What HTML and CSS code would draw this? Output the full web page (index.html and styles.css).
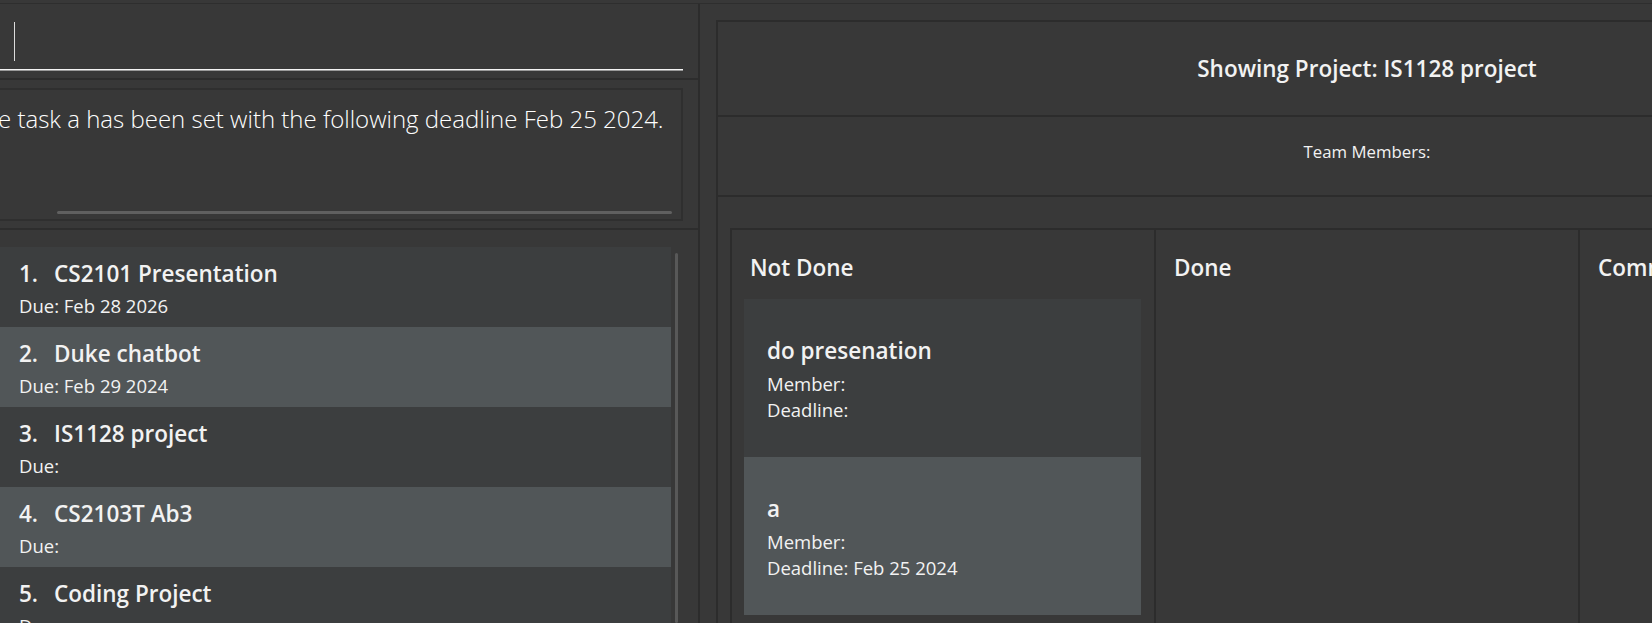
FILE: index.html
```html
<!DOCTYPE html>
<html>
<head>
<meta charset="utf-8">
<title>Project view</title>
<link rel="stylesheet" href="styles.css">
</head>
<body>
<div class="app">
  <div class="left">
    <div class="command-pane">
      <div class="command-field"><span class="caret"></span></div>
    </div>
    <div class="result-pane">
      <div class="result-box">
        <p class="result-text">e task a has been set with the following deadline Feb 25 2024.</p>
        <div class="hscroll"></div>
      </div>
    </div>
    <div class="list-pane">
      <ul class="task-list">
        <li class="task even"><div class="task-title"><span class="idx">1.</span><span>CS2101 Presentation</span></div><div class="task-due">Due: Feb 28 2026</div></li>
        <li class="task odd"><div class="task-title"><span class="idx">2.</span><span>Duke chatbot</span></div><div class="task-due">Due: Feb 29 2024</div></li>
        <li class="task even"><div class="task-title"><span class="idx">3.</span><span>IS1128 project</span></div><div class="task-due">Due:</div></li>
        <li class="task odd"><div class="task-title"><span class="idx">4.</span><span>CS2103T Ab3</span></div><div class="task-due">Due:</div></li>
        <li class="task even"><div class="task-title"><span class="idx">5.</span><span>Coding Project</span></div><div class="task-due">Due:</div></li>
      </ul>
      <div class="vscroll"></div>
    </div>
  </div>
  <div class="divider"></div>
  <div class="right">
    <div class="project">
      <div class="proj-header">Showing Project: IS1128 project</div>
      <div class="team">Team Members:</div>
      <div class="kanban">
        <section class="col">
          <h2 class="col-title">Not Done</h2>
          <div class="cards">
            <div class="card even">
              <div class="card-title">do presenation</div>
              <div class="card-line first">Member:</div>
              <div class="card-line">Deadline:</div>
            </div>
            <div class="card odd">
              <div class="card-title">a</div>
              <div class="card-line first">Member:</div>
              <div class="card-line">Deadline: Feb 25 2024</div>
            </div>
          </div>
        </section>
        <section class="col">
          <h2 class="col-title">Done</h2>
        </section>
        <section class="col">
          <h2 class="col-title">Comments</h2>
        </section>
      </div>
    </div>
  </div>
</div>
</body>
</html>
```
FILE: styles.css
```css
* { box-sizing: border-box; margin: 0; padding: 0; }

html, body {
  width: 1652px;
  height: 623px;
  overflow: hidden;
}

body {
  background: #383838;
  font-family: "Open Sans", "Noto Sans", sans-serif;
  color: #f2f2f2;
}

.app {
  display: flex;
  margin-top: 3px;
  border-top: 1px solid #2e2e2e;
  height: 620px;
  width: max-content;
}

/* ---------- left column ---------- */
.left {
  width: 698px;
  flex: none;
  display: flex;
  flex-direction: column;
}

.command-pane {
  height: 76px;
  border-bottom: 2px solid #2d2d2d;
  padding-right: 15px;
}

.command-field {
  height: 66px;
  border-bottom: 1px solid #f4f4f4;
  box-shadow: 0 1px 0 #9a9a9a;
  padding: 18px 0 0 14px;
}

.caret {
  display: block;
  width: 1px;
  height: 39px;
  background: #dcdcdc;
}

.result-pane {
  height: 150px;
  border-bottom: 2px solid #2d2d2d;
  padding: 8px 15px 0 0;
}

.result-box {
  height: 133px;
  margin-left: -2px;
  border: 2px solid #2f2f2f;
  display: flex;
  flex-direction: column;
  overflow: hidden;
}

.result-text {
  font-weight: 300;
  font-size: 24px;
  line-height: 34px;
  padding-top: 12px;
  white-space: nowrap;
  text-indent: -2px;
  color: #ffffff;
}

.hscroll {
  margin: auto 9px 5px 57px;
  height: 3px;
  border-radius: 2px;
  background: #606060;
}

.list-pane {
  flex: 1;
  display: flex;
  padding-top: 17px;
  overflow: hidden;
}

.task-list {
  list-style: none;
  width: 671px;
  flex: none;
}

.task {
  height: 80px;
  padding: 12px 0 0 19px;
}

.even { background: #3c3e3f; }
.odd { background: #515658; }

.task-title {
  display: flex;
  font-size: 22.5px;
  font-weight: 600;
  line-height: 30px;
}

.idx { margin-right: 16px; }

.task-due {
  margin-top: 4px;
  font-size: 18.5px;
  line-height: 26px;
}

.vscroll {
  width: 3px;
  margin: 6px 0 0 4px;
  background: #585858;
  border-radius: 2px;
}

.divider {
  width: 2px;
  flex: none;
  background: #2c2c2c;
}

/* ---------- right column ---------- */
.right {
  flex: none;
  width: 1320px;
  padding: 16px 0 0 16px;
}

.project {
  width: 1300px;
  height: 700px;
  border-left: 2px solid #2c2c2c;
  border-top: 2px solid #2c2c2c;
}

.proj-header {
  height: 95px;
  border-bottom: 2px solid #2c2c2c;
  text-align: center;
  font-size: 22.5px;
  font-weight: 600;
  line-height: 93px;
}

.team {
  height: 80px;
  border-bottom: 2px solid #2c2c2c;
  padding-top: 20px;
  text-align: center;
  font-size: 16.8px;
  line-height: 30px;
}

.kanban {
  display: flex;
  margin: 31px 0 0 12px;
  height: 500px;
  border-left: 2px solid #2c2c2c;
  border-top: 2px solid #2c2c2c;
}

.col {
  width: 424px;
  flex: none;
  border-right: 2px solid #2c2c2c;
}

.col + .col { width: 424px; }

.col-title {
  padding: 23px 0 0 18px;
  font-size: 22.5px;
  font-weight: 600;
  line-height: 30px;
}

.cards {
  margin-top: 16px;
  padding-left: 12px;
}

.card {
  width: 397px;
  height: 158px;
  padding: 37px 0 0 23px;
}

.card-title {
  font-size: 22.5px;
  font-weight: 600;
  line-height: 30px;
}

.card-line {
  font-size: 18.5px;
  line-height: 26px;
}

.card-line.first { margin-top: 5px; }
```
